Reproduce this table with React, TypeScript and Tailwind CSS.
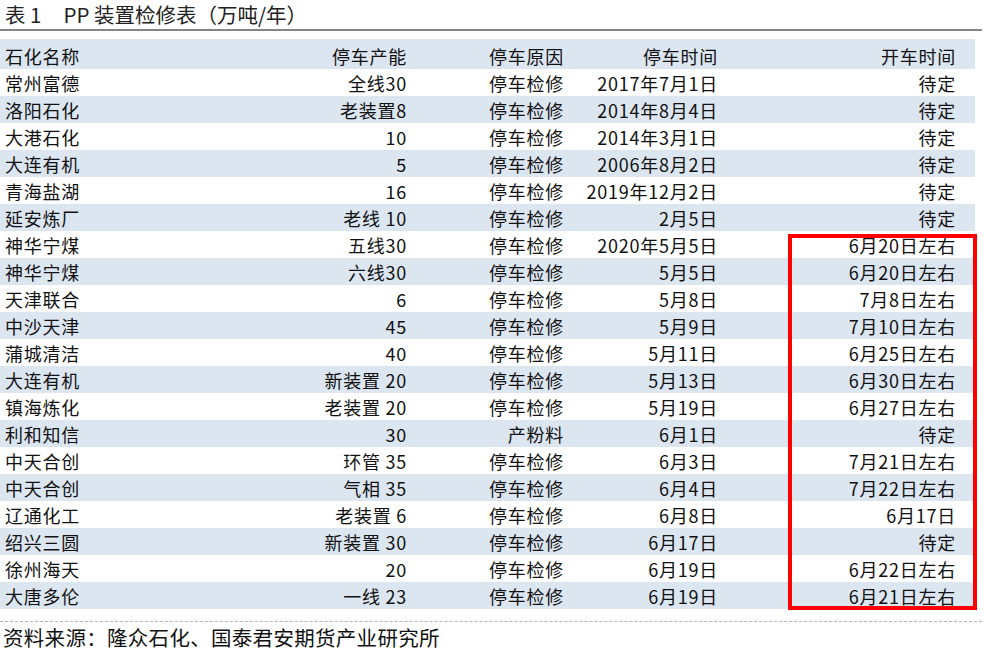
import React from "react";

const rows: string[][] = [
  ["常州富德", "全线30", "停车检修", "2017年7月1日", "待定"],
  ["洛阳石化", "老装置8", "停车检修", "2014年8月4日", "待定"],
  ["大港石化", "10", "停车检修", "2014年3月1日", "待定"],
  ["大连有机", "5", "停车检修", "2006年8月2日", "待定"],
  ["青海盐湖", "16", "停车检修", "2019年12月2日", "待定"],
  ["延安炼厂", "老线 10", "停车检修", "2月5日", "待定"],
  ["神华宁煤", "五线30", "停车检修", "2020年5月5日", "6月20日左右"],
  ["神华宁煤", "六线30", "停车检修", "5月5日", "6月20日左右"],
  ["天津联合", "6", "停车检修", "5月8日", "7月8日左右"],
  ["中沙天津", "45", "停车检修", "5月9日", "7月10日左右"],
  ["蒲城清洁", "40", "停车检修", "5月11日", "6月25日左右"],
  ["大连有机", "新装置 20", "停车检修", "5月13日", "6月30日左右"],
  ["镇海炼化", "老装置 20", "停车检修", "5月19日", "6月27日左右"],
  ["利和知信", "30", "产粉料", "6月1日", "待定"],
  ["中天合创", "环管 35", "停车检修", "6月3日", "7月21日左右"],
  ["中天合创", "气相 35", "停车检修", "6月4日", "7月22日左右"],
  ["辽通化工", "老装置 6", "停车检修", "6月8日", "6月17日"],
  ["绍兴三圆", "新装置 30", "停车检修", "6月17日", "待定"],
  ["徐州海天", "20", "停车检修", "6月19日", "6月22日左右"],
  ["大唐多伦", "一线 23", "停车检修", "6月19日", "6月21日左右"],
];

const cellFont = {
  fontFamily: '"Liberation Sans Narrow", "Noto Sans CJK SC", sans-serif',
};

function Row({ cells, blue, header }: { cells: string[]; blue: boolean; header?: boolean }) {
  return (
    <div
      className={`grid grid-cols-[200px_207px_157px_154px_238px] items-center text-[18px] tracking-[0.75px] text-[#111] leading-none ${
        header ? "h-[30px] pt-[3px]" : "h-[27px]"
      } ${blue ? "bg-[#dce6f1]" : "bg-white"}`}
      style={cellFont}
    >
      <div className="pl-[5px] text-left whitespace-pre">{cells[0]}</div>
      <div className="text-right whitespace-pre">{cells[1]}</div>
      <div className="text-right whitespace-pre">{cells[2]}</div>
      <div className="text-right whitespace-pre">{cells[3]}</div>
      <div className="text-right whitespace-pre">{cells[4]}</div>
    </div>
  );
}

export default function App() {
  return (
    <div className="relative w-[984px] h-[654px] bg-white overflow-hidden" style={{ fontFamily: '"Noto Sans CJK SC", sans-serif' }}>
      <div className="h-[29px] flex items-center pl-[5px] text-[20.5px] text-[#222] leading-none">
        <span>表 1</span>
        <span className="ml-[22px]">PP 装置检修表（万吨/年）</span>
      </div>
      <div className="h-[2px] w-[982px] bg-[#858585]" />
      <div className="h-[8px]" />
      <div className="w-[975px]">
        <Row cells={["石化名称", "停车产能", "停车原因", "停车时间", "开车时间"]} blue header />
        {rows.map((r, i) => (
          <Row key={i} cells={r} blue={i % 2 === 1} />
        ))}
      </div>
      <div className="h-[12px]" />
      <div className="w-[982px] border-t border-dashed border-[#b5b5b5]" />
      <div className="pl-[3px] pt-[3px] text-[20.5px] tracking-[0.3px] text-[#111] leading-[25px]">
        资料来源：隆众石化、国泰君安期货产业研究所
      </div>
      <div className="absolute left-[788px] top-[234px] w-[189px] h-[376px] border-[4px] border-[#ff0000]" />
    </div>
  );
}
